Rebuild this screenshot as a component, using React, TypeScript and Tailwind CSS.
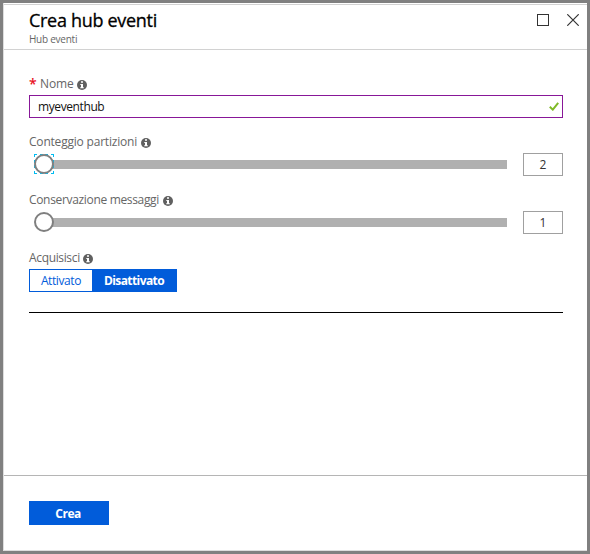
import type { ReactNode } from "react";

function Info() {
  return (
    <svg width="10" height="10" viewBox="0 0 10 10" className="mt-px shrink-0">
      <circle cx="5" cy="5" r="5" fill="#606060" />
      <path d="M4 1.3h2v1.5H4zM3.3 4H6v3.3h.8v1H3.2v-1H4V5h-.7z" fill="#fff" />
    </svg>
  );
}

function Label({ children, className }: { children: ReactNode; className: string }) {
  return (
    <div className={`flex h-[22px] items-center text-[12px] whitespace-nowrap text-[#666] ${className}`}>
      {children}
      <Info />
    </div>
  );
}

function Slider({ value, focused }: { value: number; focused?: boolean }) {
  return (
    <div className="flex h-[23px] items-start justify-between">
      <div className="flex h-[23px] w-[478px] items-start pl-[5px]">
        <div className="z-10 mt-px size-5 shrink-0">
          <svg width="20" height="20" viewBox="0 0 20 20" className="block">
            {focused && (
              <path
                d="M0 .5H3M6 .5H9M11 .5H14M17 .5H20M19.5 1V3M19.5 6V9M19.5 11V14M19.5 17V20M19 19.5H17M14 19.5H11M9 19.5H6M3 19.5H0M.5 19V17M.5 14V11M.5 9V6M.5 3V1"
                fill="none"
                stroke="#00bcf2"
              />
            )}
            <circle cx="10" cy="10" r="9" fill="#fff" stroke="#7f7f7f" strokeWidth="2" />
          </svg>
        </div>
        <div className="mt-[7px] -ml-0.5 h-[9px] grow bg-[#b0b0b0]" />
      </div>
      <div className="flex h-[23px] w-10 items-center justify-center border border-[#a0a0a0] text-[12px] text-[#333]">
        {value}
      </div>
    </div>
  );
}

export default function App() {
  return (
    <div className="h-[554px] w-[590px] border-[3px] border-[#808080] bg-white font-['Open_Sans','Noto_Sans',sans-serif]">
      <div className="flex h-full flex-col border-b border-l border-[#ddd] pt-px">
        <header className="flex h-[46px] justify-between border-y border-[#d2d2d2] pr-2 pl-[25px]">
          <div>
            <h1 className="mt-[3px] h-6 text-[18px] leading-6 font-normal tracking-[-0.3px] whitespace-nowrap text-black [-webkit-text-stroke:0.3px_black]">Crea hub eventi</h1>
            <p className="text-[10px] leading-[14px] tracking-[-0.25px] text-[#666]">Hub eventi</p>
          </div>
          <div className="flex gap-[18px] pt-[9px]">
            <svg width="12" height="12" viewBox="0 0 12 12">
              <rect x=".5" y=".5" width="11" height="11" fill="none" stroke="#333" />
            </svg>
            <svg width="12" height="12" viewBox="0 0 12 12">
              <path d="M.3.3l11.4 11.4M11.7.3L.3 11.7" fill="none" stroke="#333" strokeWidth="1.2" />
            </svg>
          </div>
        </header>
        <main className="flex grow flex-col pt-[23px] pr-6 pl-[25px]">
          <Label className="gap-[3px]">
            <span className="flex items-center gap-[5px]">
              <span className="w-[6px] text-[14px] leading-4 font-semibold text-[#e81123]">*</span>
              <span className="tracking-[-0.1px]">Nome</span>
            </span>
          </Label>
          <div className="flex h-[23px] items-center justify-between border border-[#881798] pr-[3px] pl-2 text-[12px] text-[#111]">
            <span className="tracking-[-0.4px]">myeventhub</span>
            <svg width="10" height="9" viewBox="0 0 10 9">
              <path d="M.8 4.7l3 2.9L9.2.8" fill="none" stroke="#7fba27" strokeWidth="2" />
            </svg>
          </div>
          <div className="mt-[13px]">
            <Label className="gap-[4px]"><span className="tracking-[-0.2px]">Conteggio partizioni</span></Label>
            <Slider value={2} focused />
          </div>
          <div className="mt-[13px]">
            <Label className="gap-[4px]"><span className="tracking-[-0.33px]">Conservazione messaggi</span></Label>
            <Slider value={1} />
          </div>
          <div className="mt-[13px]">
            <Label className="gap-[3px]"><span className="tracking-[-0.35px]">Acquisisci</span></Label>
          </div>
          <div className="flex h-[23px] w-[148px] border border-[#015cda] text-[12px] leading-[22px]">
            <div className="w-[62px] text-center tracking-[-0.4px] text-[#015cda]">Attivato</div>
            <div className="grow bg-[#015cda] text-center font-bold tracking-[-0.6px] text-white">Disattivato</div>
          </div>
          <div className="mt-5 h-px bg-black" />
        </main>
        <footer className="h-[75px] border-t border-[#b5b5b5] pt-[25px] pl-[25px]">
          <button className="block h-6 w-20 bg-[#015cda] pt-px pr-0.5 text-center text-[12px] leading-[23px] font-bold tracking-[-0.5px] text-white">Crea</button>
        </footer>
      </div>
    </div>
  );
}
